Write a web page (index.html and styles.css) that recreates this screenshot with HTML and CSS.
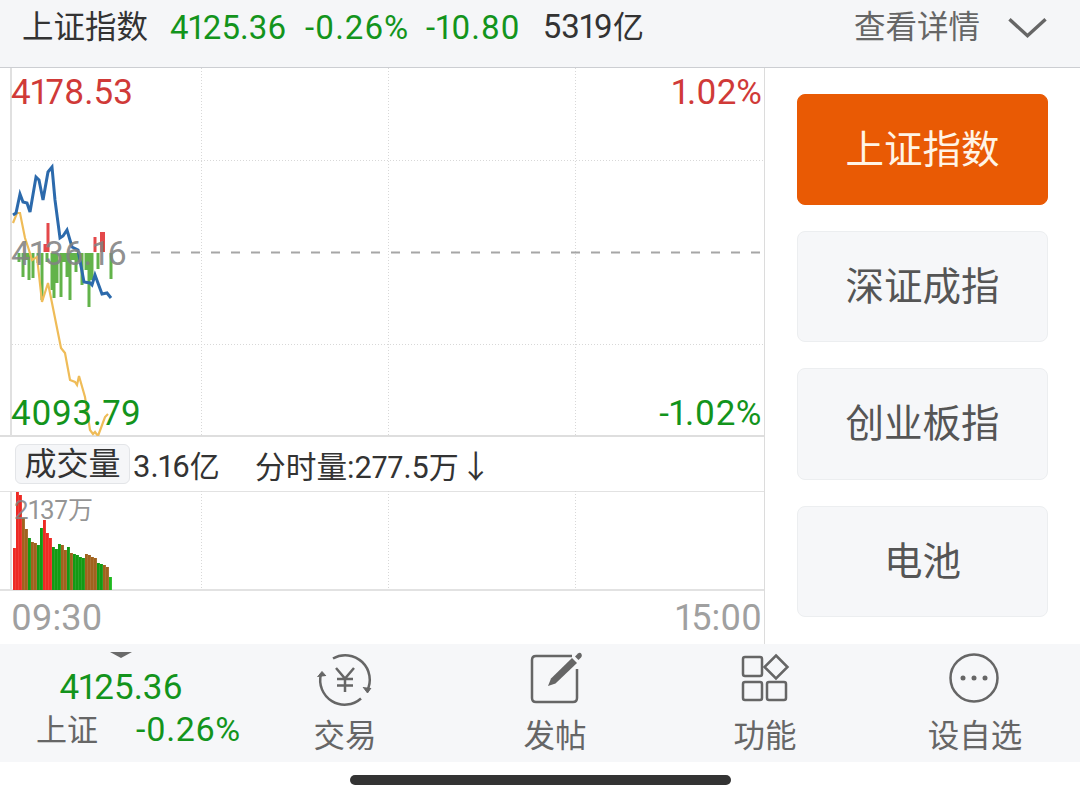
FILE: index.html
```html
<!DOCTYPE html>
<html>
<head>
    <meta charset="utf-8">
    <link rel="stylesheet" href="styles.css">
</head>
<body>
    <header class="topbar">
        <span class="name">上证指数</span>
        <span class="down">4125.36</span>
        <span class="down pct">-0.26%</span>
        <span class="down change">-10.80</span>
        <span class="amount">5319<span class="unit">亿</span></span>
        <span class="details">查看详情</span>
        <svg class="chevron" width="40" height="22" viewBox="0 0 40 22">
            <path d="M1.5 2 L20 19 L38.5 2" />
        </svg>
    </header>

    <main class="content">
        <section class="charts">
            <div class="price-chart">
                <svg class="plot" width="765" height="368" viewBox="0 68 765 368">
                    <g class="grid">
                        <line x1="201.5" y1="68" x2="201.5" y2="436" />
                        <line x1="388.5" y1="68" x2="388.5" y2="436" />
                        <line x1="575.5" y1="68" x2="575.5" y2="436" />
                        <line x1="12" y1="160.5" x2="764" y2="160.5" />
                        <line x1="12" y1="344.5" x2="764" y2="344.5" />
                    </g>
                    <line class="axis" x1="11" y1="68" x2="11" y2="436" />
                    <line class="baseline" x1="131" y1="252.5" x2="764" y2="252.5" />
                    <path class="bars-up" d="M45 252V244M48 252V223M95 252V237" />
                    <path class="bar-wide" d="M102.500 252V232" />
                    <path class="bars-down" d="M23 253V277M29 253V280M33 253V278M38 253V263M42 253V300M52 253V290M54 253V298M57 253V283M61 253V297M67 253V277M70 253V300M76 253V272M82 253V285M86 253V270M89 253V307M92 253V280M98 253V269M111 253V279M19 253V262M26 253V260M47 253V262M64 253V262M73 253V260M79 253V262" />
                    <polyline class="line-avg" points="13,223 17,213 20,213 25,238 28,247 32,260 37,257 42,302 48,283 55,318 61,348 65,353 70,380 75,382 77,385 79,376 85,397 90,430 93,434 95,432 98,436 105,417 108,414" />
                    <polyline class="line-price" points="13,215 16,213 20,194 23,202 27,203 30,212 36,177 39,180 43,200 48,172 52,167 55,200 60,238 63,236 67,230 72,247 78,250 84,282 90,283 92,285 95,275 102,294 107,293 111,298" />
                </svg>
                <span class="label left top up">4178.53</span>
                <span class="label right top up">1.02%</span>
                <span class="label left middle">4136.16</span>
                <span class="label left bottom down">4093.79</span>
                <span class="label right bottom down">-1.02%</span>
            </div>

            <div class="volume-tabs">
                <span class="tab">成交量</span>
                <span class="total">3.16<span class="unit">亿</span></span>
                <span class="minute">分时量:277.5<span class="unit">万</span></span>
                <span class="arrow">↓</span>
            </div>

            <div class="volume-chart">
                <svg class="plot" width="765" height="100" viewBox="0 491 765 100">
                    <g class="grid">
                        <line x1="201.5" y1="491" x2="201.5" y2="590" />
                        <line x1="388.5" y1="491" x2="388.5" y2="590" />
                        <line x1="575.5" y1="491" x2="575.5" y2="590" />
                    </g>
                    <line class="axis" x1="11" y1="491" x2="11" y2="590" />
                    <rect class="vol-up" x="13" y="548" width="3" height="42" />
                    <rect class="vol-up" x="16" y="492" width="3" height="98" />
                    <rect class="vol-up" x="19" y="495" width="3" height="95" />
                    <rect class="vol-mix" x="22" y="518" width="3" height="72" />
                    <rect class="vol-mix" x="25" y="529" width="3" height="61" />
                    <rect class="vol-down" x="28" y="538" width="3" height="52" />
                    <rect class="vol-mix" x="31" y="542" width="3" height="48" />
                    <rect class="vol-mix" x="34" y="543" width="3" height="47" />
                    <rect class="vol-down" x="37" y="545" width="3" height="45" />
                    <rect class="vol-down" x="40" y="528" width="3" height="62" />
                    <rect class="vol-up" x="43" y="520" width="3" height="70" />
                    <rect class="vol-up" x="46" y="533" width="3" height="57" />
                    <rect class="vol-up" x="49" y="538" width="3" height="52" />
                    <rect class="vol-down" x="52" y="547" width="3" height="43" />
                    <rect class="vol-down" x="55" y="549" width="3" height="41" />
                    <rect class="vol-down" x="58" y="544" width="3" height="46" />
                    <rect class="vol-mix" x="61" y="545" width="3" height="45" />
                    <rect class="vol-mix" x="64" y="550" width="3" height="40" />
                    <rect class="vol-down" x="67" y="547" width="3" height="43" />
                    <rect class="vol-mix" x="70" y="553" width="3" height="37" />
                    <rect class="vol-down" x="73" y="554" width="3" height="36" />
                    <rect class="vol-down" x="76" y="555" width="3" height="35" />
                    <rect class="vol-down" x="79" y="557" width="3" height="33" />
                    <rect class="vol-down" x="82" y="558" width="3" height="32" />
                    <rect class="vol-mix" x="85" y="554" width="3" height="36" />
                    <rect class="vol-mix" x="88" y="555" width="3" height="35" />
                    <rect class="vol-mix" x="91" y="557" width="3" height="33" />
                    <rect class="vol-mix" x="94" y="558" width="3" height="32" />
                    <rect class="vol-down" x="97" y="563" width="3" height="27" />
                    <rect class="vol-down" x="100" y="564" width="3" height="26" />
                    <rect class="vol-mix" x="103" y="565" width="3" height="25" />
                    <rect class="vol-mix" x="106" y="567" width="3" height="23" />
                    <rect class="vol-bright" x="109" y="577" width="3" height="13" />
                </svg>
                <span class="vol-max">2137<span class="unit">万</span></span>
            </div>

            <div class="times">
                <span>09:30</span>
                <span>15:00</span>
            </div>
        </section>

        <aside class="side">
            <div class="side-btn active">上证指数</div>
            <div class="side-btn">深证成指</div>
            <div class="side-btn">创业板指</div>
            <div class="side-btn">电池</div>
        </aside>
    </main>

    <nav class="bottombar">
        <div class="quote">
            <span class="caret"></span>
            <span class="quote-price down">4125.36</span>
            <div class="quote-row">
                <span class="quote-name">上证</span>
                <span class="quote-pct down">-0.26%</span>
            </div>
        </div>
        <div class="nav-item">
            <svg class="nav-icon" width="60" height="60" viewBox="0 0 60 60">
                <path d="M18 8.500 A24.500 24.500 0 0 1 52 41" />
                <path d="M48 37 L52.500 43 L56 38" class="tip" />
                <path d="M46 48.500 A24.500 24.500 0 0 1 6 24" />
                <path d="M2.500 27 L7 21.500 L11 26" class="tip" />
                <path d="M21 18 L30 28.500 L39 18 M30 28.500 V42 M22 29 H38 M22 35.500 H38" />
            </svg>
            <span>交易</span>
        </div>
        <div class="nav-item">
            <svg class="nav-icon" width="60" height="60" viewBox="0 0 60 60">
                <path d="M47 6 H11 Q7 6 7 10 V48 Q7 52 11 52 H48 Q52 52 52 48 V19" />
                <polygon class="pen" points="23,36 26,28.500 47,8 52,13 30.500,33.500" />
                <path class="pen-tip" d="M50 6.500 L53 3.500 Q55 2 56.500 4 Q57.500 6 56 7.500 L53.500 10 Z" />
            </svg>
            <span>发帖</span>
        </div>
        <div class="nav-item">
            <svg class="nav-icon" width="60" height="60" viewBox="0 0 60 60">
                <rect x="8" y="7" width="19" height="19" rx="2" />
                <path d="M41 5.500 L52.500 17 L41 28.500 L29.500 17 Z" />
                <rect x="8" y="32" width="19" height="18" rx="2" />
                <rect x="32" y="32" width="19" height="18" rx="2" />
            </svg>
            <span>功能</span>
        </div>
        <div class="nav-item">
            <svg class="nav-icon" width="60" height="60" viewBox="0 0 60 60">
                <circle cx="29" cy="28" r="23.500" />
                <circle class="dot" cx="18" cy="28" r="2.500" />
                <circle class="dot" cx="29" cy="28" r="2.500" />
                <circle class="dot" cx="40" cy="28" r="2.500" />
            </svg>
            <span>设自选</span>
        </div>
    </nav>

    <div class="home-row">
        <div class="home-bar"></div>
    </div>
</body>
</html>
```

FILE: styles.css
```css
* {
    box-sizing: border-box;
}
body {
    margin: 0;
    width: 1080px;
    height: 804px;
    overflow: hidden;
    background-color: #fff;
    font-family: Roboto, "Noto Sans CJK SC", sans-serif;
    font-variant-numeric: proportional-nums;
    color: #333;
}
.down {
    color: #13941c;
}
.up {
    color: #d03a38;
}
.unit {
    font-size: 31px;
}

/* top bar */
.topbar {
    display: flex;
    align-items: center;
    height: 68px;
    padding: 0 33px 12px 22px;
    background-color: #f5f6f8;
    border-bottom: 1px solid #ccced2;
    font-size: 33px;
    line-height: 54px;
}
.topbar .name {
    width: 148px;
    font-size: 31.500px;
}
.topbar .down {
    margin-right: 19px;
}
.topbar .pct {
    margin-right: 17px;
    letter-spacing: 0.900px;
}
.topbar .change {
    letter-spacing: 0.800px;
}
.topbar .amount {
    margin-left: 3px;
}
.details {
    margin-left: auto;
    font-size: 31.500px;
    color: #666;
}
.chevron {
    margin-left: 28px;
    width: 39px;
}
.chevron path {
    fill: none;
    stroke: #666;
    stroke-width: 3.500;
}

/* charts */
.content {
    display: flex;
    height: 576px;
}
.charts {
    width: 765px;
    border-right: 1px solid #dcdcdc;
}
.price-chart {
    position: relative;
    height: 369px;
    border-bottom: 2px solid #dedede;
}
.plot {
    display: block;
}
.grid line {
    stroke: #d8d8d8;
    stroke-width: 1;
    stroke-dasharray: 1 2;
}
.axis {
    stroke: #e0e0e0;
    stroke-width: 2;
}
.baseline {
    stroke: #a6a6a6;
    stroke-width: 2;
    stroke-dasharray: 9 11;
}
.bars-up {
    fill: none;
    stroke: #e4484a;
    stroke-width: 3;
}
.bar-wide {
    fill: none;
    stroke: #e4484a;
    stroke-width: 5;
}
.bars-down {
    fill: none;
    stroke: #62b34a;
    stroke-width: 3;
}
.line-price {
    fill: none;
    stroke: #2c6aac;
    stroke-width: 3;
}
.line-avg {
    fill: none;
    stroke: #efbc58;
    stroke-width: 2.200;
}
.label {
    position: absolute;
    font-size: 35px;
    line-height: 40px;
}
.label.left {
    left: 11px;
}
.label.right {
    right: 2px;
}
.label.top {
    top: 5px;
}
.label.middle {
    top: 165px;
    font-size: 34px;
    color: rgba(130, 130, 130, 0.9);
}
.label.bottom {
    top: 326px;
    letter-spacing: 0.500px;
}

/* volume */
.volume-tabs {
    display: flex;
    align-items: center;
    height: 54px;
    padding-left: 15px;
    font-size: 32px;
}
.tab {
    width: 115px;
    height: 40px;
    margin-right: 3px;
    text-align: center;
    line-height: 38px;
    background-color: #f5f6f8;
    border: 1px solid #e3e5e8;
    border-radius: 6px;
}
.total {
    width: 122px;
    font-size: 31px;
}
.total .unit {
    font-size: 30px;
}
.minute {
    font-size: 30.700px;
}
.minute .unit {
    font-size: 30px;
}
.arrow {
    font-size: 32px;
    margin-left: 1px;
}
.volume-chart {
    position: relative;
    height: 100px;
    border-top: 1px solid #e2e2e2;
    border-bottom: 2px solid #e2e2e2;
}
.volume-chart .plot {
    margin-top: -1px;
}
.volume-chart rect {
    width: 2.900px;
}
.vol-up {
    fill: #ee2a24;
}
.vol-down {
    fill: #139a14;
}
.vol-mix {
    fill: #a0621e;
}
.vol-bright {
    fill: #1fb81f;
}
.vol-max {
    position: absolute;
    left: 14px;
    top: 0;
    font-size: 26px;
    line-height: 36px;
    color: rgba(130, 130, 130, 0.85);
}
.vol-max .unit {
    font-size: 25px;
}
.times {
    display: flex;
    justify-content: space-between;
    height: 54px;
    padding: 0 2px 0 11px;
    font-size: 36px;
    line-height: 54px;
    color: #a0a0a0;
}

/* index buttons */
.side {
    flex: 1;
    display: flex;
    flex-direction: column;
    gap: 25.800px;
    padding: 26px 32px 0;
}
.side-btn {
    height: 111.600px;
    padding-bottom: 7px;
    display: flex;
    align-items: center;
    justify-content: center;
    font-size: 38.500px;
    color: #555;
    background-color: #f6f7f9;
    border: 1px solid #eceef0;
    border-radius: 8px;
}
.side-btn.active {
    height: 111px;
    color: #fff4e6;
    background-color: #e95a04;
    border-color: #e95a04;
}

/* bottom nav */
.bottombar {
    display: grid;
    grid-template-columns: 240px repeat(4, 210px);
    height: 118px;
    background-color: #f6f7f9;
}
.quote {
    position: relative;
    padding: 24px 0 0 36px;
}
.caret {
    position: absolute;
    left: 110px;
    top: 8px;
    border-left: 11px solid transparent;
    border-right: 11px solid transparent;
    border-top: 6px solid #6a6a6a;
}
.quote-price {
    display: block;
    width: 170px;
    text-align: center;
    font-size: 35px;
    line-height: 40px;
}
.quote-row {
    display: flex;
    align-items: center;
    gap: 38px;
    height: 42px;
    font-size: 31px;
    white-space: nowrap;
}
.quote-pct {
    font-size: 34px;
    letter-spacing: 0.500px;
}
.quote-name {
    flex-shrink: 0;
    margin-bottom: 4px;
    color: #666;
}
.nav-item {
    display: flex;
    flex-direction: column;
    align-items: center;
    padding-top: 6px;
    font-size: 31.500px;
    line-height: 48px;
    color: #666;
}
.nav-item span {
    margin-top: 3px;
}
.nav-icon path,
.nav-icon rect,
.nav-icon circle {
    fill: none;
    stroke: #666;
    stroke-width: 2.500;
}
.nav-icon .tip {
    fill: #666;
    stroke-width: 1;
}
.nav-icon .pen {
    fill: #666;
}
.nav-icon .pen-tip {
    fill: #666;
    stroke: none;
}
.nav-icon .dot {
    fill: #666;
    stroke: none;
}

/* home indicator */
.home-row {
    display: flex;
    justify-content: center;
    padding-top: 13px;
}
.home-bar {
    width: 381px;
    height: 10px;
    background-color: #333;
    border-radius: 5px;
}
```
